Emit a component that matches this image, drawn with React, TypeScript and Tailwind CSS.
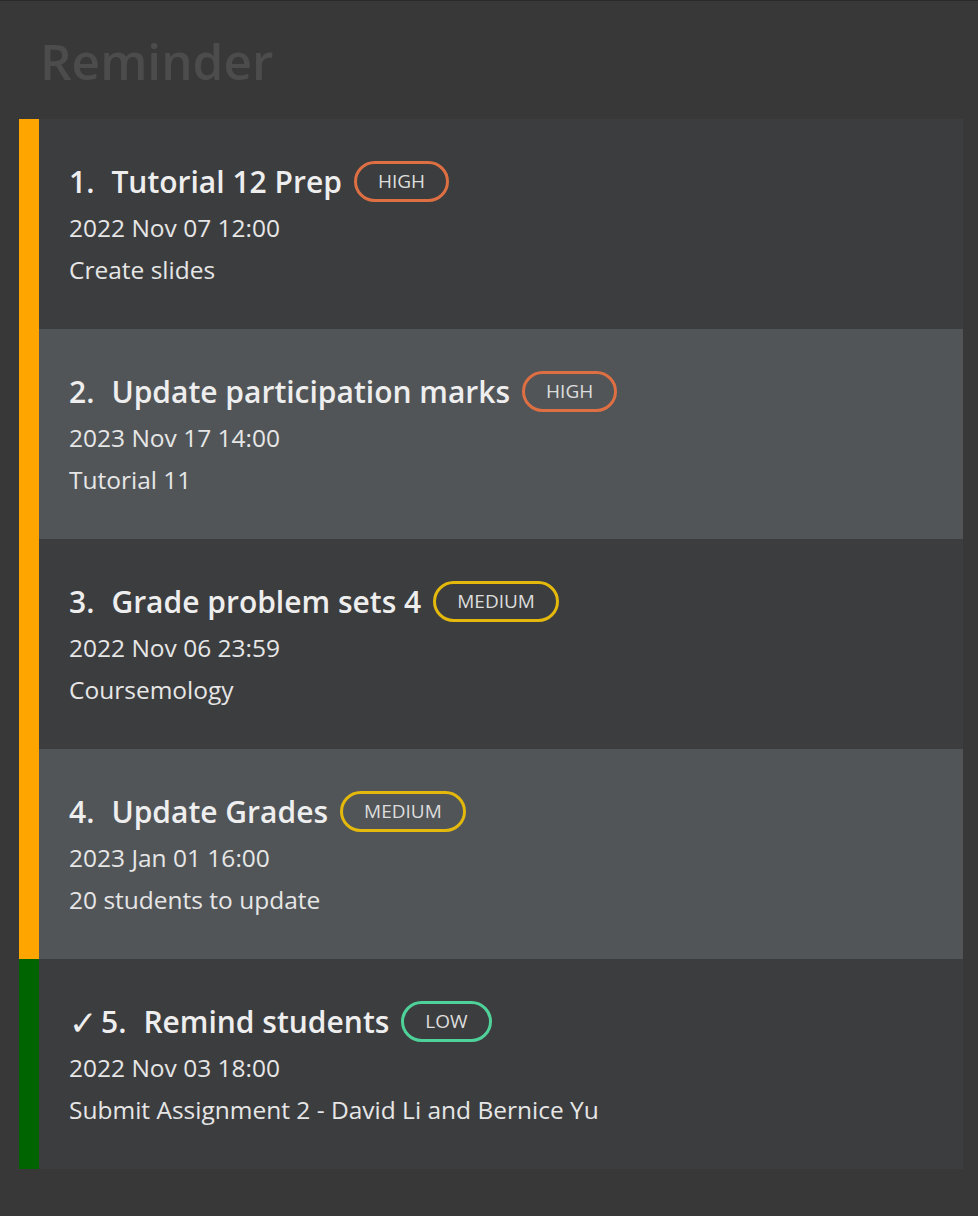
const reminders = [
  { n: 1, title: "Tutorial 12 Prep", priority: "HIGH", date: "2022 Nov 07 12:00", desc: "Create slides", done: false },
  { n: 2, title: "Update participation marks", priority: "HIGH", date: "2023 Nov 17 14:00", desc: "Tutorial 11", done: false },
  { n: 3, title: "Grade problem sets 4", priority: "MEDIUM", date: "2022 Nov 06 23:59", desc: "Coursemology", done: false },
  { n: 4, title: "Update Grades", priority: "MEDIUM", date: "2023 Jan 01 16:00", desc: "20 students to update", done: false },
  { n: 5, title: "Remind students", priority: "LOW", date: "2022 Nov 03 18:00", desc: "Submit Assignment 2 - David Li and Bernice Yu", done: true },
]

const badgeColor: Record<string, string> = {
  HIGH: "border-[#dd6f43]",
  MEDIUM: "border-[#e4b90c]",
  LOW: "border-[#4fd19a]",
}

function ReminderCard({ r, index }: { r: (typeof reminders)[number]; index: number }) {
  return (
    <div className={`flex h-[210px] ${index % 2 === 1 ? "bg-[#515558]" : "bg-[#3c3d3f]"}`}>
      <div className={`w-[20px] shrink-0 ${r.done ? "bg-[#006400]" : "bg-[#ffa500]"}`} />
      <div className="pl-[30px] pt-[42px]">
        <div className="flex items-center h-[41px]">
          {r.done && <span className="text-[34px] leading-none text-[#eeeeee] mr-[4px]">✓</span>}
          <span className="text-[30px] font-semibold text-[#eeeeee]">{r.n}.</span>
          <span className="ml-[17px] text-[30px] font-semibold text-[#eeeeee]">{r.title}</span>
          <span
            className={`ml-[12px] h-[41px] px-[21px] flex items-center rounded-full border-[3px] text-[19px] text-[#dddddd] ${badgeColor[r.priority]}`}
          >
            {r.priority}
          </span>
        </div>
        <div className="mt-[11px] leading-[30px] text-[24.5px] text-[#e6e6e6]">{r.date}</div>
        <div className="mt-[12px] leading-[30px] text-[24.5px] text-[#e6e6e6]">{r.desc}</div>
      </div>
    </div>
  )
}

export default function App() {
  return (
    <div className="min-h-[1216px] bg-[#383838] border-t border-[#2a2a2a] pl-[19px] pr-[15px] font-['Open_Sans','Noto_Sans',sans-serif]">
      <h1 className="h-[118px] flex items-center pl-[21px] pt-[2px] text-[49.5px] font-semibold text-[#4c4c4c]">
        Reminder
      </h1>
      <div className="flex flex-col">
        {reminders.map((r, i) => (
          <ReminderCard key={r.n} r={r} index={i} />
        ))}
      </div>
    </div>
  )
}
